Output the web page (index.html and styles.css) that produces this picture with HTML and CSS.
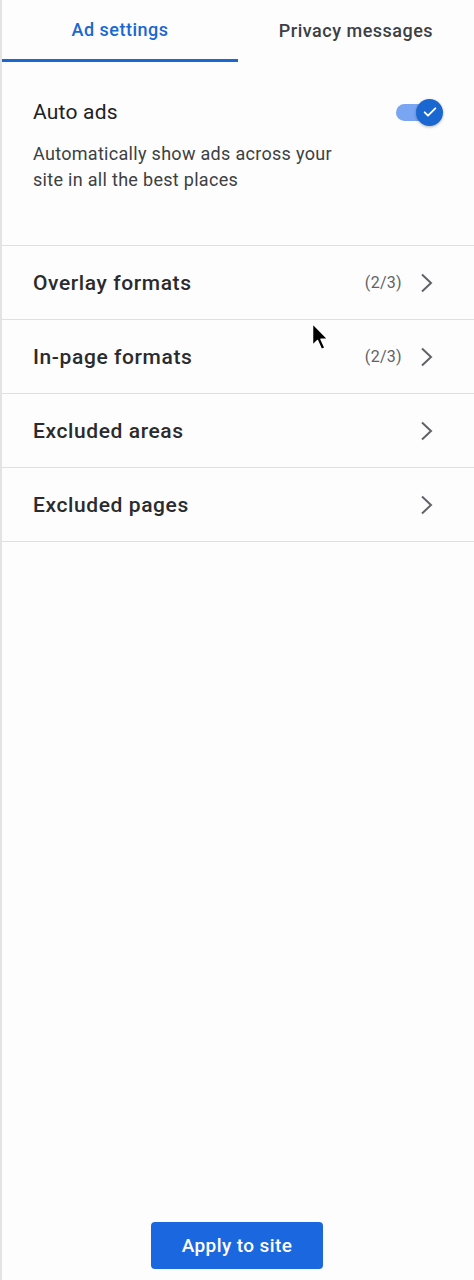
FILE: index.html
```html
<!DOCTYPE html>
<html>
<head>
<meta charset="utf-8">
<link rel="stylesheet" href="styles.css">
</head>
<body>
<div class="panel">
  <div class="tabs">
    <div class="tab active">Ad settings</div>
    <div class="tab">Privacy messages</div>
  </div>
  <div class="auto">
    <div class="auto-head">
      <div class="auto-title">Auto ads</div>
      <div class="toggle">
        <div class="track"></div>
        <div class="knob">
          <svg width="16" height="16" viewBox="0 0 24 24"><path d="M4 12.5l5 5L20 6.5" fill="none" stroke="#fff" stroke-width="2.8" stroke-linecap="round" stroke-linejoin="round"/></svg>
        </div>
      </div>
    </div>
    <p class="auto-desc">Automatically show ads across your<br>site in all the best places</p>
  </div>
  <div class="list">
    <div class="row"><span class="row-label">Overlay formats</span><span class="count">(2/3)</span><svg class="chev" width="14" height="20" viewBox="0 0 14 20"><path d="M2 1.5l9 8.5-9 8.5" fill="none" stroke="#5f6368" stroke-width="2"/></svg></div>
    <div class="row"><span class="row-label">In-page formats</span><span class="count">(2/3)</span><svg class="chev" width="14" height="20" viewBox="0 0 14 20"><path d="M2 1.5l9 8.5-9 8.5" fill="none" stroke="#5f6368" stroke-width="2"/></svg></div>
    <div class="row"><span class="row-label">Excluded areas</span><svg class="chev" width="14" height="20" viewBox="0 0 14 20"><path d="M2 1.5l9 8.5-9 8.5" fill="none" stroke="#5f6368" stroke-width="2"/></svg></div>
    <div class="row"><span class="row-label">Excluded pages</span><svg class="chev" width="14" height="20" viewBox="0 0 14 20"><path d="M2 1.5l9 8.5-9 8.5" fill="none" stroke="#5f6368" stroke-width="2"/></svg></div>
  </div>
  <div class="footer">
    <button class="apply">Apply to site</button>
  </div>
  <svg class="cursor" width="20" height="30" viewBox="0 0 20 30"><path d="M1.5 1.5v22l5-5 4 9 3.5-1.6-4-8.6h7z" fill="#000" stroke="#fff" stroke-width="1.5" stroke-linejoin="round"/></svg>
</div>
</body>
</html>
```
FILE: styles.css
```css
html, body {
  margin: 0;
  padding: 0;
  background: #fdfdfd;
}
body {
  font-family: Roboto, "Open Sans", Arial, sans-serif;
  color: #202124;
}
.panel {
  position: relative;
  min-height: 1280px;
  box-sizing: border-box;
  border-left: 2px solid #e3e3e3;
  display: flex;
  flex-direction: column;
  background: #fdfdfd;
}
.tabs {
  display: flex;
  height: 62px;
}
.tab {
  width: 236px;
  box-sizing: border-box;
  display: flex;
  align-items: center;
  justify-content: center;
  padding-bottom: 2px;
  font-size: 18px;
  font-weight: 500;
  color: #3c4043;
  letter-spacing: 0.5px;
}
.tab.active {
  color: #1a67d2;
  border-bottom: 3px solid #1a67d2;
  padding-bottom: 0;
}
.auto {
  padding: 26px 28px 0 31px;
  height: 184px;
  box-sizing: border-box;
  border-bottom: 1px solid #e0e0e0;
}
.auto-head {
  display: flex;
  align-items: center;
  justify-content: space-between;
  height: 48px;
}
.auto-title {
  font-size: 21px;
  letter-spacing: 0.2px;
  color: #202124;
}
.toggle {
  position: relative;
  width: 49px;
  height: 27px;
  margin-right: 3px;
}
.track {
  position: absolute;
  left: 2px;
  top: 5px;
  width: 40px;
  height: 17px;
  border-radius: 9px;
  background: #7aa5f2;
}
.knob {
  position: absolute;
  right: 0;
  top: 0;
  width: 27px;
  height: 27px;
  border-radius: 50%;
  background: #1a67d2;
  box-shadow: 0 1px 3px rgba(0,0,0,0.3);
  display: flex;
  align-items: center;
  justify-content: center;
}
.auto-desc {
  margin: 5px 0 0;
  font-size: 18px;
  line-height: 26px;
  letter-spacing: 0.3px;
  color: #3c4043;
}
.row {
  display: flex;
  align-items: center;
  height: 74px;
  box-sizing: border-box;
  border-bottom: 1px solid #e0e0e0;
  padding: 0 40px 0 31px;
}
.row-label {
  flex: 1;
  font-size: 21px;
  font-weight: 500;
  letter-spacing: 0.6px;
  color: #2a2b2e;
}
.count {
  font-size: 16px;
  letter-spacing: 0.3px;
  color: #5f6368;
  margin-right: 18px;
}
.chev {
  display: block;
}
.footer {
  margin-top: auto;
  display: flex;
  justify-content: center;
  padding: 0 0 11px;
}
.apply {
  width: 172px;
  height: 47px;
  border: none;
  border-radius: 4px;
  background: #1a67e0;
  color: #fff;
  font-family: Roboto, "Open Sans", Arial, sans-serif;
  font-size: 19px;
  font-weight: 500;
  letter-spacing: 0.4px;
  margin-right: 2px;
}
.cursor {
  position: absolute;
  left: 309px;
  top: 322px;
}
```
